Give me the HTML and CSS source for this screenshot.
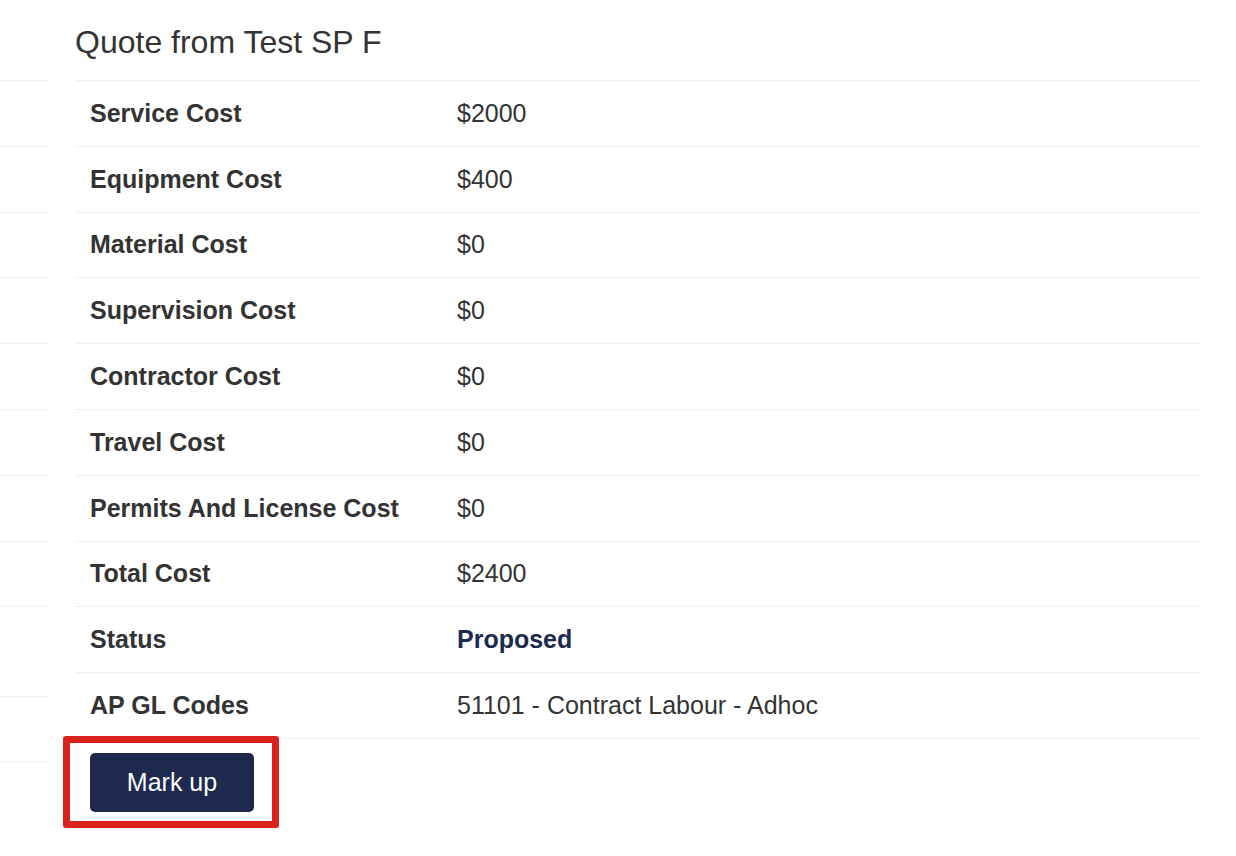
FILE: index.html
```html
<!DOCTYPE html>
<html lang="en">
<head>
<meta charset="utf-8">
<title>Quote from Test SP F</title>
<link rel="stylesheet" href="styles.css">
</head>
<body>
<div class="page">
  <div class="side">
    <div class="side-row first"></div>
    <div class="side-row"></div>
    <div class="side-row"></div>
    <div class="side-row"></div>
    <div class="side-row"></div>
    <div class="side-row"></div>
    <div class="side-row"></div>
    <div class="side-row"></div>
    <div class="side-row"></div>
    <div class="side-row tall"></div>
    <div class="side-row short"></div>
  </div>
  <div class="main">
    <h2 class="title">Quote from Test SP F</h2>
    <div class="table">
      <div class="row"><div class="label">Service Cost</div><div class="value">$2000</div></div>
      <div class="row"><div class="label">Equipment Cost</div><div class="value">$400</div></div>
      <div class="row"><div class="label">Material Cost</div><div class="value">$0</div></div>
      <div class="row"><div class="label">Supervision Cost</div><div class="value">$0</div></div>
      <div class="row"><div class="label">Contractor Cost</div><div class="value">$0</div></div>
      <div class="row"><div class="label">Travel Cost</div><div class="value">$0</div></div>
      <div class="row"><div class="label">Permits And License Cost</div><div class="value">$0</div></div>
      <div class="row"><div class="label">Total Cost</div><div class="value">$2400</div></div>
      <div class="row"><div class="label">Status</div><div class="value status">Proposed</div></div>
      <div class="row last"><div class="label">AP GL Codes</div><div class="value">51101 - Contract Labour - Adhoc</div></div>
    </div>
    <div class="actions">
      <button class="btn" type="button">Mark up</button>
      <span class="highlight"></span>
    </div>
  </div>
</div>
</body>
</html>
```

FILE: styles.css
```css
html, body {
  margin: 0;
  padding: 0;
  background: #ffffff;
}

body {
  font-family: "Liberation Sans", Arial, Helvetica, sans-serif;
  color: #333333;
  min-height: 856px;
}

.page {
  display: flex;
  align-items: flex-start;
  padding-bottom: 44px;
}

.side {
  width: 48px;
  flex: none;
}

.side-row {
  box-sizing: border-box;
  height: 65.8px;
  border-bottom: 1px solid #eeeeee;
}

.side-row.first {
  height: 81px;
}

.side-row.tall {
  height: 89.6px;
}

.side-row.short {
  height: 65px;
}

.main {
  margin-left: 27px;
  width: 1125px;
  flex: none;
}

.title {
  box-sizing: border-box;
  height: 80px;
  margin: 0;
  padding-top: 24px;
  font-size: 32px;
  font-weight: normal;
  line-height: 37px;
  color: #333333;
}

.table {
  display: flex;
  flex-direction: column;
}

.row {
  box-sizing: border-box;
  height: 65.8px;
  display: flex;
  align-items: center;
  border-top: 1px solid #eeeeee;
  font-size: 25px;
}

.row.last {
  border-bottom: 1px solid #eeeeee;
  height: 66.8px;
}

.label {
  width: 382px;
  flex: none;
  box-sizing: border-box;
  padding-left: 15px;
  font-weight: bold;
  color: #333333;
}

.value {
  color: #333333;
}

.value.status {
  font-weight: bold;
  color: #1c2a4f;
}

.actions {
  position: relative;
  display: flex;
  padding-left: 15px;
  padding-top: 14px;
}

.btn {
  width: 164px;
  height: 59px;
  border: none;
  border-radius: 5px;
  background: #1d2a4e;
  color: #ffffff;
  font-family: "Liberation Sans", Arial, Helvetica, sans-serif;
  font-size: 25px;
  padding: 0;
}

.highlight {
  position: absolute;
  left: -12px;
  top: -3px;
  width: 216px;
  height: 92px;
  box-sizing: border-box;
  border: 7px solid #d8221b;
  border-radius: 3px;
  pointer-events: none;
}
```
